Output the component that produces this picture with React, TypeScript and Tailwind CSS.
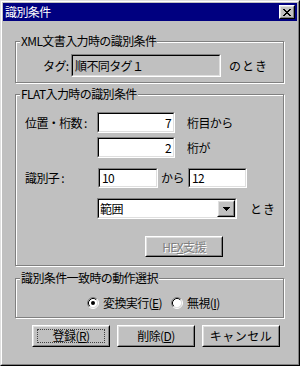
import React from 'react';

type BoxProps = { className?: string; bg?: string; align?: string; children?: React.ReactNode };

// 凹んだ入力枠
const Field: React.FC<BoxProps> = ({ className = '', bg = 'bg-white', align = 'justify-start', children }) => (
  <div className={`border border-t-[#808080] border-l-[#808080] border-b-white border-r-white ${className}`}>
    <div className={`h-full flex items-center px-[2px] border border-t-black border-l-black border-b-[#dfdfdf] border-r-[#dfdfdf] ${bg} ${align}`}>
      {children}
    </div>
  </div>
);

// 浮き出しボタン枠
const Raised: React.FC<BoxProps> = ({ className = '', children }) => (
  <div className={`border border-t-white border-l-white border-b-black border-r-black bg-[#c0c0c0] ${className}`}>
    <div className="h-full flex items-center justify-center border border-t-[#dfdfdf] border-l-[#dfdfdf] border-b-[#808080] border-r-[#808080]">
      {children}
    </div>
  </div>
);

const Radio: React.FC<{ checked?: boolean; className?: string }> = ({ checked, className = '' }) => (
  <svg width="12" height="12" viewBox="0 0 12 12" className={`shrink-0 ${className}`}>
    <circle cx="6" cy="6" r="4.5" fill="#fff" />
    <path d="M2.11 9.89 A5.5 5.5 0 0 1 9.89 2.11" stroke="#808080" fill="none" />
    <path d="M9.89 2.11 A5.5 5.5 0 0 1 2.11 9.89" stroke="#fff" fill="none" />
    <path d="M2.82 9.18 A4.5 4.5 0 0 1 9.18 2.82" stroke="#000" fill="none" />
    <path d="M9.18 2.82 A4.5 4.5 0 0 1 2.82 9.18" stroke="#dfdfdf" fill="none" />
    {checked && <circle cx="6" cy="6" r="2" fill="#000" />}
  </svg>
);

const CloseGlyph = () => (
  <svg width="8" height="7" viewBox="0 0 8 7" shapeRendering="crispEdges">
    <path d="M0 0h2v1h-2zM6 0h2v1h-2zM1 1h2v1h-2zM5 1h2v1h-2zM2 2h4v1h-4zM3 3h2v1h-2zM2 4h4v1h-4zM1 5h2v1h-2zM5 5h2v1h-2zM0 6h2v1h-2zM6 6h2v1h-2z" fill="#000" />
  </svg>
);

const groupClass =
  'w-[269px] border border-[#808080] shadow-[1px_1px_0_#fff,inset_1px_1px_0_#fff]';

const App: React.FC = () => {
  return (
    <div className="w-[300px] h-[366px] bg-[#c0c0c0] border border-t-[#dfdfdf] border-l-[#dfdfdf] border-b-black border-r-black text-black text-[12px] leading-[12px] tracking-[-0.6px] whitespace-nowrap font-['Noto_Sans_CJK_JP',sans-serif]">
      <div className="h-full flex flex-col p-[1px] border border-t-white border-l-white border-b-[#808080] border-r-[#808080]">
        {/* タイトルバー */}
        <div className="h-[18px] bg-[#000080] flex items-center justify-between pl-[2px] pr-[2px]">
          <span className="text-white">識別条件</span>
          <Raised className="w-[16px] h-[14px]">
            <CloseGlyph />
          </Raised>
        </div>

        <div className="flex flex-col px-[12px]">
          {/* XML */}
          <fieldset className={`mt-[14px] h-[48px] ${groupClass}`}>
            <legend className="ml-[4px] px-[1px] bg-[#c0c0c0] leading-[12px]">XML文書入力時の識別条件</legend>
            <div className="mt-[7px] flex items-center pl-[27px]">
              <span className="w-[28px]">タグ:</span>
              <Field className="w-[150px] h-[23px]" bg="bg-[#c0c0c0]">順不同タグ１</Field>
              <span className="ml-[8px] tracking-[1px]">のとき</span>
            </div>
          </fieldset>

          {/* FLAT */}
          <fieldset className={`mt-[5px] h-[178px] ${groupClass}`}>
            <legend className="ml-[4px] px-[1px] bg-[#c0c0c0] leading-[12px]">FLAT入力時の識別条件</legend>
            <div className="mt-[12px] flex flex-col pl-[9px]">
              <div className="flex items-center h-[21px]">
                <span className="w-[72px]">位置・桁数 :</span>
                <Field className="w-[78px] h-[21px]" align="justify-end">7</Field>
                <span className="ml-[12px]">桁目から</span>
              </div>
              <div className="mt-[4px] flex items-center h-[21px]">
                <span className="w-[72px]" />
                <Field className="w-[78px] h-[21px]" align="justify-end">2</Field>
                <span className="ml-[12px]">桁が</span>
              </div>
              <div className="mt-[10px] flex items-center h-[20px]">
                <span className="w-[73px]">識別子 :</span>
                <Field className="w-[60px] h-[20px]">10</Field>
                <span className="ml-[3px] w-[27px]">から</span>
                <Field className="w-[59px] h-[20px]">12</Field>
              </div>
              <div className="mt-[10px] flex items-center h-[21px]">
                <span className="w-[72px]" />
                <div className="w-[140px] h-[21px] border border-t-[#808080] border-l-[#808080] border-b-white border-r-white">
                  <div className="h-full flex items-center border border-t-black border-l-black border-b-[#dfdfdf] border-r-[#dfdfdf] bg-white">
                    <span className="flex-1 px-[1px]">範囲</span>
                    <Raised className="w-[18px] h-full">
                      <svg width="7" height="4" viewBox="0 0 7 4" shapeRendering="crispEdges">
                        <path d="M0 0h7v1h-7zM1 1h5v1h-5zM2 2h3v1h-3zM3 3h1v1h-1z" fill="#000" />
                      </svg>
                    </Raised>
                  </div>
                </div>
                <span className="ml-[13px] tracking-[1px]">とき</span>
              </div>
              <div className="mt-[17px] flex pl-[120px]">
                <Raised className="w-[78px] h-[21px]">
                  <span className="text-[#808080] [text-shadow:1px_1px_0_#fff]">
                    HE<span className="underline">X</span>支援
                  </span>
                </Raised>
              </div>
            </div>
          </fieldset>

          {/* 動作選択 */}
          <fieldset className={`mt-[6px] h-[46px] ${groupClass}`}>
            <legend className="ml-[4px] px-[1px] bg-[#c0c0c0] leading-[12px]">識別条件一致時の動作選択</legend>
            <div className="mt-[12px] flex items-center pl-[71px] h-[13px]">
              <Radio checked />
              <span className="ml-[4px]">
                変換実行(<span className="underline">E</span>)
              </span>
              <Radio className="ml-[9px]" />
              <span className="ml-[4px]">
                無視(<span className="underline">I</span>)
              </span>
            </div>
          </fieldset>

          {/* ボタン */}
          <div className="mt-[7px] flex gap-[7px] pl-[17px]">
            <Raised className="w-[78px] h-[22px]">
              <div className="w-[68px] h-[14px] flex items-center justify-center border border-dotted border-[#404040]">
                登録(<span className="underline">R</span>)
              </div>
            </Raised>
            <Raised className="w-[78px] h-[22px]">
              削除(<span className="underline">D</span>)
            </Raised>
            <Raised className="w-[78px] h-[22px]">
              <span className="tracking-[0.5px]">キャンセル</span>
            </Raised>
          </div>
        </div>
      </div>
    </div>
  );
};

export default App;
